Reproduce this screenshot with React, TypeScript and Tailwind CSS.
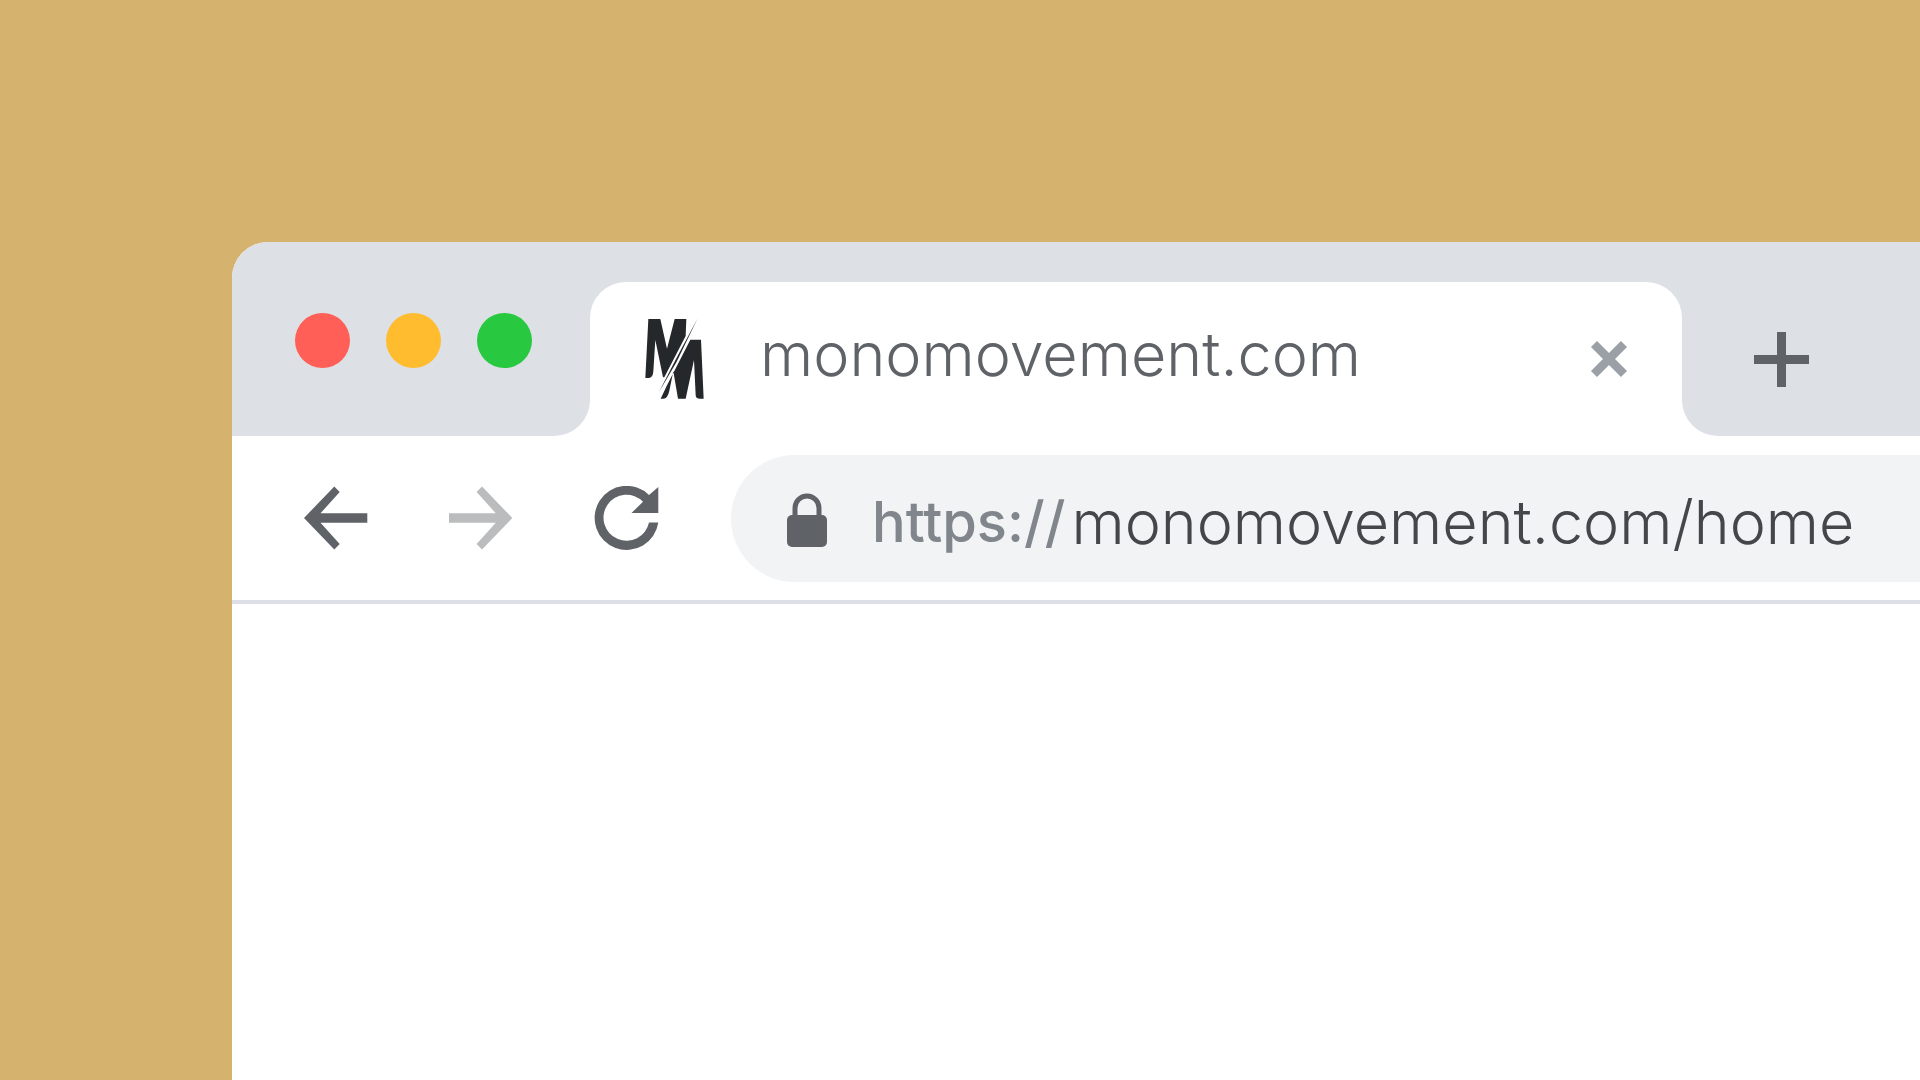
import React from "react";

const trafficLights = [
  { label: "Close window", color: "bg-[#ff5f57]" },
  { label: "Minimize window", color: "bg-[#febc2e]" },
  { label: "Zoom window", color: "bg-[#28c840]" },
];

function Logo() {
  return (
    <svg viewBox="0 0 180 246" className="h-[82px] w-[60px] shrink-0" fill="#25282a" aria-hidden="true">
      <path d="M13 3H49L69 92L92 3H127L125 54L61 178H57L34 66L28 160Q27 180 14 180H4Z" />
      <path d="M139 65H171L179 242H165Q156 242 155 232L150 126L125 242H102L88 160L76 218Q71 242 58 242H50L68 204Z" />
      <path d="M161 1L98 131L45 222L94 127Z" />
    </svg>
  );
}

function TabStrip() {
  return (
    <header className="flex h-[194px] bg-[#dde1e6]">
      <div className="flex w-[358px] shrink-0 items-start gap-9 pt-[71px] pl-[63px]">
        {trafficLights.map((light) => (
          <button key={light.label} aria-label={light.label} className={`size-[55px] rounded-full ${light.color}`} />
        ))}
      </div>
      <div className="relative mt-10 flex min-w-0 flex-1 items-center rounded-t-[36px] bg-white pr-[54px] pl-[54px]">
        <span className="absolute bottom-0 -left-9 size-9 bg-white">
          <span className="block size-9 rounded-br-[36px] bg-[#dde1e6]" />
        </span>
        <span className="absolute -right-9 bottom-0 size-9 bg-white">
          <span className="block size-9 rounded-bl-[36px] bg-[#dde1e6]" />
        </span>
        <Logo />
        <span className="ml-14 flex-1 pb-2.5 text-[61px] leading-[80px] font-light whitespace-nowrap text-[#5f6368]">
          monomovement.com
        </span>
        <button aria-label="Close tab" className="shrink-0">
          <svg viewBox="0 0 38 38" className="size-[38px]" stroke="#9aa0a6" strokeWidth="8.5" fill="none">
            <path d="M4 4L34 34M34 4L4 34" />
          </svg>
        </button>
      </div>
      <div className="flex w-[238px] shrink-0 items-start pt-[90px] pl-[72px]">
        <button aria-label="New tab">
          <svg viewBox="0 0 55 55" className="size-[55px]" fill="#5f6368">
            <path d="M23 0H32V23H55V32H32V55H23V32H0V23H23Z" />
          </svg>
        </button>
      </div>
    </header>
  );
}

function Toolbar() {
  return (
    <nav className="flex h-[168px] items-center border-b-4 border-[#dddfe6] bg-white pl-[72px]">
      <div className="flex shrink-0 gap-[81px]">
        <button aria-label="Back">
          <svg viewBox="0 0 64 64" className="size-16" fill="#5f6368">
            <path d="M0 32L30.3 0.5L35.7 6L16.5 27.3H63.3V36.7H16.5L35.7 58L30.3 63.5Z" />
          </svg>
        </button>
        <button aria-label="Forward">
          <svg viewBox="0 0 64 64" className="size-16" fill="#babcbe">
            <path d="M63.3 32L33 0.5L27.6 6L46.8 27.3H0V36.7H46.8L27.6 58L33 63.5Z" />
          </svg>
        </button>
        <button aria-label="Reload">
          <svg viewBox="-1 0 65 64" className="h-16 w-[65px]" fill="#5f6368">
            <path d="M54 9A32 32 0 1 0 63.3 36.5H54A23 23 0 1 1 48 15.7L36.5 27H63.3V1Z" />
          </svg>
        </button>
      </div>
      <div className="ml-[72px] flex h-[127px] min-w-0 flex-1 items-center rounded-l-full bg-[#f1f3f4] pt-1 pl-14">
        <svg viewBox="0 0 40 54" className="h-[54px] w-10 shrink-0" aria-hidden="true">
          <path d="M8 26V15A12 12 0 0 1 32 15V26" fill="none" stroke="#5f6368" strokeWidth="5" />
          <rect x="0" y="22" width="40" height="32" rx="5" fill="#5f6368" />
        </svg>
        <label htmlFor="address" className="ml-[45px] pt-1 text-[56px] leading-[80px] font-medium text-[#80868b]">
          https://
        </label>
        <input
          id="address"
          type="text"
          defaultValue="monomovement.com/home"
          className="ml-1.5 h-[84px] min-w-0 flex-1 bg-transparent pt-1 text-[61px] leading-[80px] font-light text-[#44474a] outline-none"
        />
      </div>
    </nav>
  );
}

export default function App() {
  return (
    <div className="flex min-h-screen flex-col bg-[#d5b26d] pt-[242px] pl-[232px] font-['Inter',sans-serif]">
      <div className="flex flex-1 flex-col overflow-hidden rounded-tl-[36px] bg-white">
        <TabStrip />
        <Toolbar />
        <main className="flex-1" />
      </div>
    </div>
  );
}
